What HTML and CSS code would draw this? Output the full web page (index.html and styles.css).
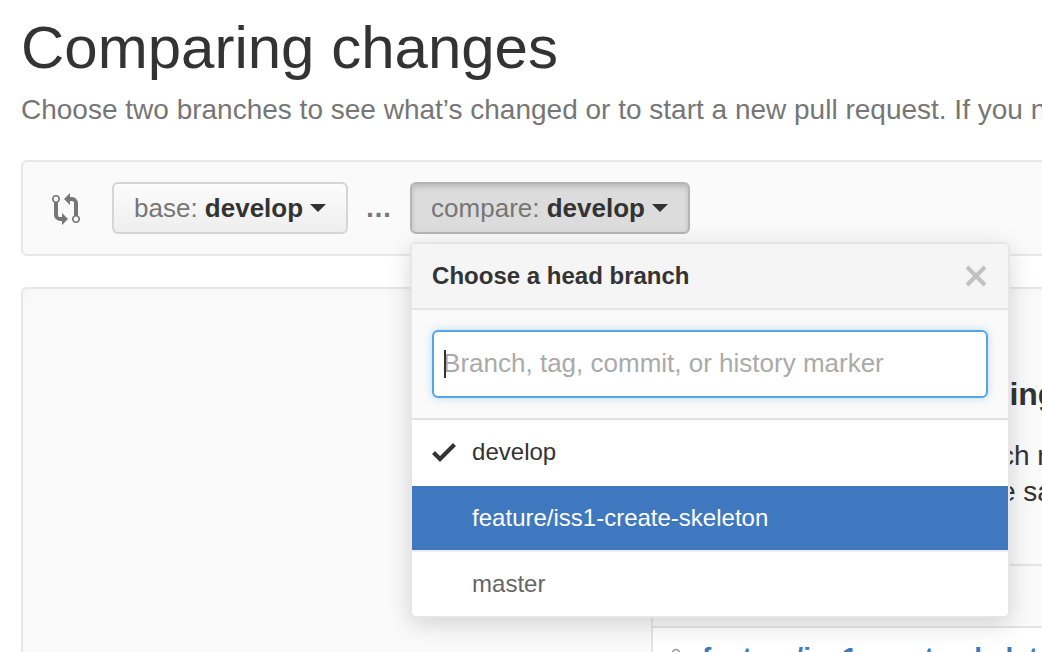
FILE: index.html
```html
<!DOCTYPE html>
<html lang="en">
<head>
<meta charset="utf-8">
<title>Comparing changes</title>
<link rel="stylesheet" href="styles.css">
</head>
<body>
<main class="page">
  <h1 class="title">Comparing changes</h1>
  <p class="lead">Choose two branches to see what’s changed or to start a new pull request. If you need to, you can also compare across forks.</p>

  <section class="range-bar">
    <svg class="compare-icon" viewBox="0 0 14 16" width="28" height="32" aria-hidden="true"><path d="M5 12H4c-.27-.02-.48-.11-.69-.31-.21-.2-.3-.42-.31-.69V4.72A1.993 1.993 0 0 0 2 1a1.993 1.993 0 0 0-1 3.72V11c.03.78.34 1.47.94 2.06.6.59 1.28.91 2.06.94h1v2l3-3-3-3v2zM2 1.8c.66 0 1.2.55 1.2 1.2 0 .65-.55 1.2-1.2 1.2C1.35 4.2.8 3.65.8 3c0-.65.55-1.2 1.2-1.2zm11 9.48V5c-.03-.78-.34-1.47-.94-2.06-.6-.59-1.28-.91-2.06-.94H9V0L6 3l3 3V4h1c.27.02.48.11.69.31.21.2.3.42.31.69v6.28A1.993 1.993 0 0 0 12 15a1.993 1.993 0 0 0 1-3.72zm-1 2.92c-.66 0-1.2-.55-1.2-1.2 0-.65.55-1.2 1.2-1.2.65 0 1.2.55 1.2 1.2 0 .65-.55 1.2-1.2 1.2z"/></svg>
    <button class="branch-btn" type="button"><span class="btn-text"><span class="btn-label">base:</span> <strong>develop</strong></span><span class="caret"></span></button>
    <span class="dots">...</span>
    <div class="menu-anchor">
      <button class="branch-btn is-open" type="button"><span class="btn-text"><span class="btn-label">compare:</span> <strong>develop</strong></span><span class="caret"></span></button>
      <div class="menu">
        <header class="menu-head">
          <span class="menu-title">Choose a head branch</span>
          <svg class="menu-close" viewBox="0 0 12 16" width="24" height="32" aria-hidden="true"><path d="M7.48 8l3.75 3.75-1.48 1.48L6 9.48l-3.75 3.75-1.48-1.48L4.52 8 .77 4.25l1.48-1.48L6 6.52l3.75-3.75 1.48 1.48L7.48 8z"/></svg>
        </header>
        <div class="menu-filter">
          <div class="filter-field">
            <input class="filter-input" type="text" placeholder="Branch, tag, commit, or history marker">
            <span class="text-caret"></span>
          </div>
        </div>
        <ul class="menu-list">
          <li class="menu-item is-current">
            <svg class="check" viewBox="0 0 12 16" width="24" height="32" aria-hidden="true"><path d="M12 5l-8 8-4-4 1.5-1.5L4 10l6.5-6.5L12 5z"/></svg>
            <span class="item-name">develop</span>
          </li>
          <li class="menu-item is-selected"><span class="item-name">feature/iss1-create-skeleton</span></li>
          <li class="menu-item is-muted"><span class="item-name">master</span></li>
        </ul>
      </div>
    </div>
  </section>

  <section class="blank">
    <div class="blank-left"></div>
    <div class="blank-right">
      <div class="intro">
        <h2 class="intro-title">Start comparing</h2>
        <p class="intro-line intro-line-a">Compare any branch r</p>
        <p class="intro-line intro-line-b">or use the sa</p>
      </div>
      <div class="spacer"></div>
      <div class="example">
        <svg class="example-icon" viewBox="0 0 20 20" width="20" height="20" aria-hidden="true"><circle cx="10" cy="11" r="3.5" fill="none" stroke="#999" stroke-width="1.5"/></svg>
        <a class="example-link" href="#">feature/iss1-create-skeleton</a>
      </div>
    </div>
  </section>
</main>
</body>
</html>
```

FILE: styles.css
```css
* { box-sizing: border-box; }

html, body {
  margin: 0;
  height: 652px;
  overflow: hidden;
  background: #fff;
}

body {
  font-family: "Liberation Sans", Arial, sans-serif;
  color: #333;
}

.page {
  width: 1200px;
  height: 652px;
  padding: 15px 0 0 21px;
  overflow: hidden;
}

.title {
  margin: 0;
  height: 65px;
  font-size: 60px;
  line-height: 66px;
  font-weight: 400;
  color: #333;
}

.lead {
  margin: 0;
  height: 80px;
  padding-top: 14px;
  font-size: 28px;
  line-height: 32px;
  color: #767676;
  white-space: nowrap;
}

.range-bar {
  display: flex;
  align-items: flex-start;
  height: 96px;
  padding: 20px 0 0 29px;
  background: #fafafa;
  border: 2px solid #e8e8e8;
  border-radius: 6px;
}

.compare-icon {
  flex: none;
  margin: 11px 32px 0 0;
  fill: #767676;
}

.branch-btn {
  display: flex;
  align-items: center;
  height: 52px;
  padding: 0 20px;
  background: linear-gradient(#fcfcfc, #eeeeee);
  border: 2px solid #d5d5d5;
  border-radius: 6px;
  font-family: inherit;
  font-size: 26px;
  color: #333;
  white-space: nowrap;
}

.btn-label { color: #767676; }

.branch-btn strong { font-weight: 700; }

.caret {
  margin-left: 7px;
  border-top: 8px solid #333;
  border-left: 8px solid transparent;
  border-right: 8px solid transparent;
}

.branch-btn.is-open {
  padding: 0 20px 0 19px;
  background: #dcdcdc;
  border-color: #b5b5b5;
  box-shadow: inset 0 3px 5px rgba(0, 0, 0, .15);
}

.dots {
  flex: none;
  width: 62px;
  padding-top: 6px;
  font-size: 27px;
  line-height: 40px;
  font-weight: 700;
  letter-spacing: 1px;
  color: #767676;
  text-align: center;
}

.menu-anchor {
  position: relative;
}

.menu {
  position: absolute;
  top: 60px;
  left: 0;
  z-index: 5;
  width: 600px;
  background: #fff;
  border: 2px solid #e6e6e6;
  border-radius: 6px;
  box-shadow: 0 6px 24px rgba(0, 0, 0, .16);
  overflow: hidden;
}

.menu-head {
  display: flex;
  align-items: center;
  justify-content: space-between;
  height: 66px;
  padding: 0 20px;
  background: #f5f5f5;
  border-bottom: 2px solid #e5e5e5;
}

.menu-title {
  font-size: 24px;
  font-weight: 700;
  color: #333;
}

.menu-close { fill: #c2c2c2; }

.menu-filter {
  height: 110px;
  padding: 20px 20px 0;
  background: #fafafa;
  border-bottom: 2px solid #e0e0e0;
}

.filter-field {
  position: relative;
}

.filter-input {
  display: block;
  width: 100%;
  height: 68px;
  padding: 0 9px 2px;
  background: #fff;
  border: 2px solid #51a7e8;
  border-radius: 6px;
  box-shadow: 0 0 8px rgba(81, 167, 232, .35);
  font-family: inherit;
  font-size: 26px;
  color: #333;
  outline: none;
}

.filter-input::placeholder { color: #aaa; opacity: 1; }

.text-caret {
  position: absolute;
  left: 12px;
  top: 20px;
  width: 2px;
  height: 28px;
  background: #333;
}

.menu-list {
  margin: 0;
  padding: 0;
  list-style: none;
}

.menu-item {
  display: flex;
  align-items: center;
  height: 66px;
  padding-left: 60px;
  position: relative;
  font-size: 24px;
  color: #333;
}

.menu-item.is-current { padding-bottom: 2px; }

.check {
  position: absolute;
  left: 20px;
  top: 16px;
  fill: #333;
}

.menu-item.is-selected {
  height: 66px;
  background: #4078c0;
  background-clip: padding-box;
  border-bottom: 2px solid #eee;
  color: #fff;
}

.menu-item.is-muted {
  height: 64px;
  color: #666;
}

.blank {
  display: flex;
  height: 420px;
  margin-top: 31px;
  background: #fafafa;
  border: 2px solid #e8e8e8;
  border-bottom: 0;
  border-radius: 6px 6px 0 0;
  box-shadow: inset 0 0 16px rgba(0, 0, 0, .02);
}

.blank-left {
  flex: none;
  width: 628px;
}

.blank-right {
  flex: 1;
  display: flex;
  flex-direction: column;
  border-left: 2px solid #e5e5e5;
}

.intro {
  height: 277px;
  padding-top: 85px;
  border-bottom: 2px solid #e5e5e5;
  white-space: nowrap;
}

.intro-title {
  margin: 0;
  padding-left: 159px;
  font-size: 32px;
  line-height: 40px;
  font-weight: 700;
  color: #333;
}

.intro-line {
  margin: 0;
  font-size: 28px;
  line-height: 36px;
  color: #333;
}

.intro-line-a { margin-top: 24px; padding-left: 115px; }

.intro-line-b { padding-left: 238px; }

.spacer {
  height: 62px;
  border-bottom: 2px solid #e5e5e5;
}

.example {
  display: flex;
  align-items: flex-start;
  flex: 1;
  gap: 16px;
  padding: 14px 0 0 13px;
  background: #fff;
}

.example-icon { flex: none; }

.example-link {
  font-size: 28px;
  line-height: 32px;
  font-weight: 700;
  color: #4078c0;
  text-decoration: none;
}
```
